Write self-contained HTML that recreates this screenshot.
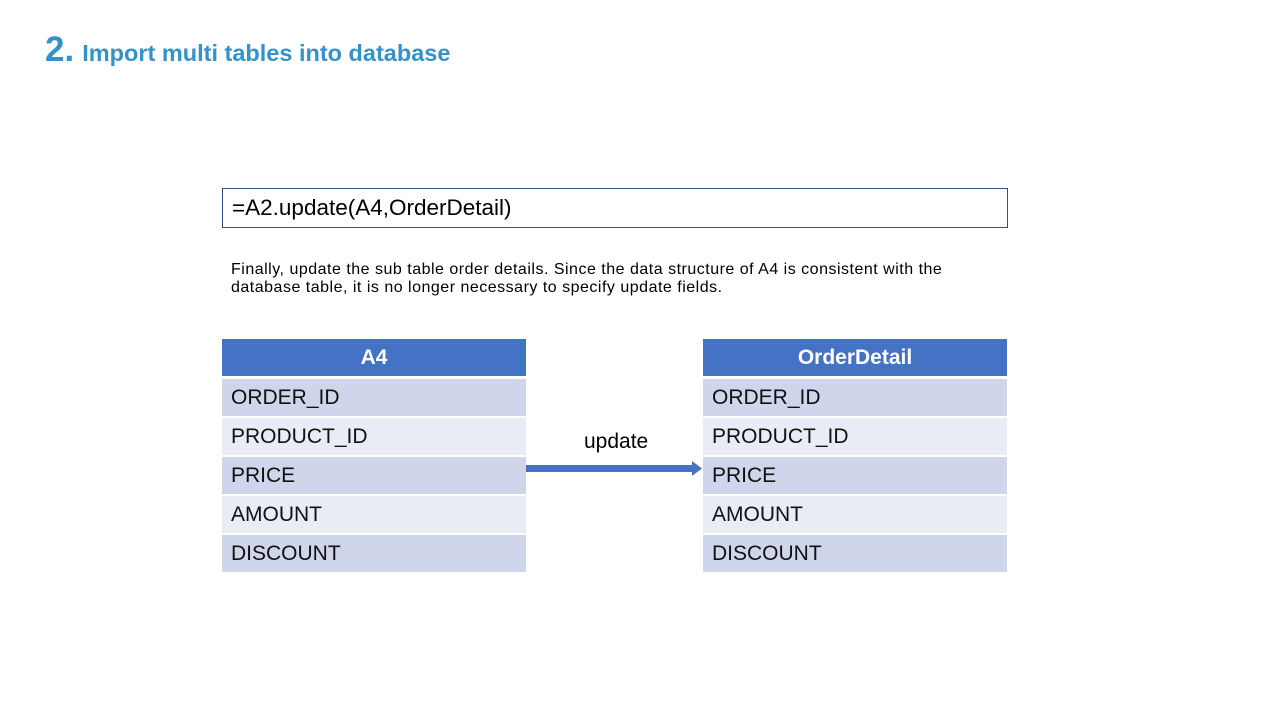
<!DOCTYPE html>
<html><head><meta charset="utf-8"><style>
body{margin:0;width:1280px;height:720px;background:#fff;position:relative;overflow:hidden;font-family:"Liberation Sans",sans-serif}
.t{position:absolute;left:45px;top:30px;color:#3592C8;font-weight:bold;white-space:nowrap}
.t .n{font-size:35px}
.t .s{font-size:23.5px;margin-left:8px}
.box{position:absolute;left:222px;top:188px;border:1px solid #2F528F;font-size:22.5px;line-height:38px;padding-left:9px;box-sizing:border-box;color:#000;width:786px;height:40px}
.p{position:absolute;left:231px;top:261px;font-size:16px;letter-spacing:0.5px;line-height:18px;color:#000;width:760px;white-space:nowrap}
.tb{position:absolute;top:339px;width:304px}
.r{height:37px;margin-bottom:2px;font-family:"Liberation Sans","Noto Sans CJK SC",sans-serif;font-size:21px;line-height:37px;padding-left:9px;color:#111}
.h{background:#4472C4;color:#fff;font-weight:bold;text-align:center;padding:0;margin-bottom:3px}
.o{background:#CFD5EA}.e{background:#E9EBF5}
.lbl{position:absolute;left:584px;top:430px;font-size:21px;color:#000;font-family:"Liberation Sans","Noto Sans CJK SC",sans-serif}
</style></head><body>
<div class="t"><span class="n">2.</span><span class="s">Import multi tables into database</span></div>
<div class="box">=A2.update(A4,OrderDetail)</div>
<div class="p">Finally, update the sub table order details. Since the data structure of A4 is consistent with the<br>database table, it is no longer necessary to specify update fields.</div>
<div class="tb" style="left:222px">
<div class="r h">A4</div><div class="r o">ORDER_ID</div><div class="r e">PRODUCT_ID</div><div class="r o">PRICE</div><div class="r e">AMOUNT</div><div class="r o">DISCOUNT</div></div>
<div class="tb" style="left:703px">
<div class="r h">OrderDetail</div><div class="r o">ORDER_ID</div><div class="r e">PRODUCT_ID</div><div class="r o">PRICE</div><div class="r e">AMOUNT</div><div class="r o">DISCOUNT</div></div>
<div class="lbl">update</div>
<svg style="position:absolute;left:526px;top:460px" width="176" height="18"><rect x="0" y="5" width="168" height="7" fill="#4472C4"/><polygon points="166,1 176,8.5 166,16" fill="#4472C4"/></svg>
</body></html>
